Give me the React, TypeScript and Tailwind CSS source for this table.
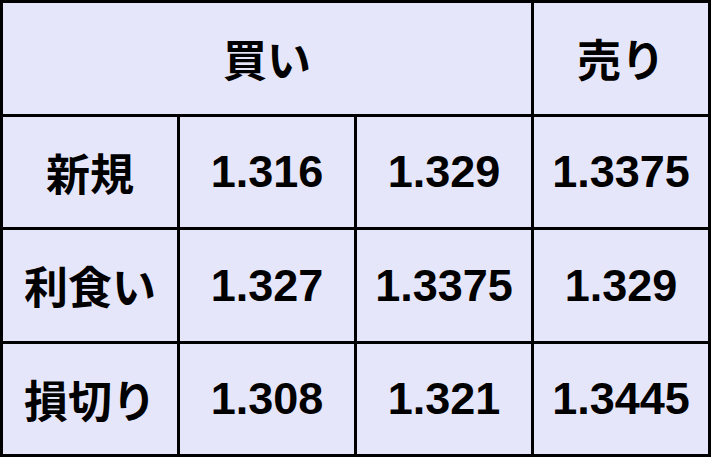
import { Fragment } from "react";

export default function App() {
  const cell =
    "bg-[#e6e6fa] flex items-center justify-center text-black";
  const jp =
    "font-['Noto_Sans_CJK_JP','Noto_Sans',sans-serif] font-bold text-[44px] leading-none";
  const num =
    "font-['Liberation_Sans',Arial,sans-serif] font-bold text-[45px] leading-none";
  const rows: [string, string, string, string][] = [
    ["新規", "1.316", "1.329", "1.3375"],
    ["利食い", "1.327", "1.3375", "1.329"],
    ["損切り", "1.308", "1.321", "1.3445"],
  ];
  return (
    <div className="w-[711px] h-[457px] bg-black p-[3px] grid grid-cols-4 grid-rows-4 gap-[3px]">
      <div className={`${cell} col-span-3`}>
        <span className={jp}>買い</span>
      </div>
      <div className={cell}>
        <span className={jp}>売り</span>
      </div>
      {rows.map((r) => (
        <Fragment key={r[0]}>
          <div className={cell}>
            <span className={jp}>{r[0]}</span>
          </div>
          <div className={cell}>
            <span className={num}>{r[1]}</span>
          </div>
          <div className={cell}>
            <span className={num}>{r[2]}</span>
          </div>
          <div className={cell}>
            <span className={num}>{r[3]}</span>
          </div>
        </Fragment>
      ))}
    </div>
  );
}
